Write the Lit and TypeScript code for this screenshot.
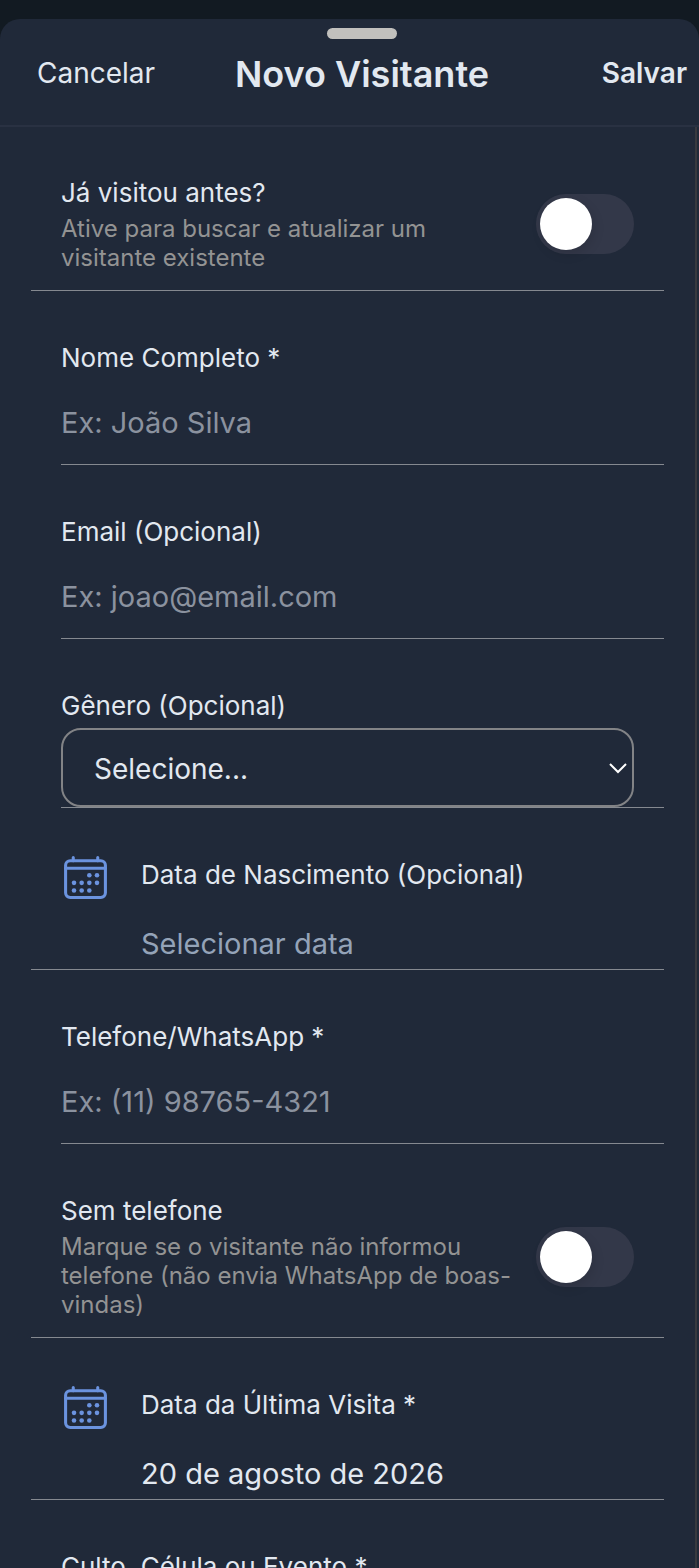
import { LitElement, html, css, svg } from "lit";
import { customElement } from "lit/decorators.js";

const dots = [
  [296, 232], [376, 232],
  [136, 312], [216, 312], [296, 312], [376, 312],
  [136, 392], [216, 392], [296, 392],
];

const calendarIcon = html`<svg class="icon" viewBox="0 0 512 512" aria-hidden="true">
  <rect x="48" y="80" width="416" height="384" rx="48" fill="none" stroke="currentColor" stroke-width="32" />
  <path d="M128 48v32M384 48v32M48 160h416" fill="none" stroke="currentColor" stroke-width="32" stroke-linecap="round" />
  ${dots.map(([x, y]) => svg`<circle cx=${x} cy=${y} r="24" fill="currentColor" />`)}
</svg>`;

@customElement("app-root")
export class AppRoot extends LitElement {
  static styles = css`
    :host {
      display: block;
      height: 100vh;
      overflow: hidden;
      background: #121a22;
      color: #e2e8f0;
      font-family: Inter, "Liberation Sans", sans-serif;
      font-size: 26px;
      line-height: 34px;
    }
    * { box-sizing: border-box; }
    button, input, select {
      margin: 0;
      padding: 0;
      border: 0;
      border-radius: 0;
      background: none;
      color: inherit;
      font: inherit;
      appearance: none;
    }
    .page { height: 100%; padding-top: 19px; }
    .sheet {
      display: flex;
      flex-direction: column;
      height: 100%;
      background: #202939;
      border-radius: 20px 20px 0 0;
    }
    .handle {
      flex: none;
      align-self: center;
      width: 70px;
      height: 11px;
      margin-top: 9px;
      margin-left: 24px;
      border-radius: 6px;
      background: #c1c0bd;
    }
    .header {
      flex: none;
      display: grid;
      grid-template-columns: 1fr auto 1fr;
      align-items: center;
      height: 88px;
      padding: 0 12px 18px 37px;
      border-bottom: 2px solid #293142;
    }
    .header-btn { font-size: 28px; justify-self: start; }
    .save { justify-self: end; font-weight: 600; }
    .title { margin: 0; padding-top: 2px; font-size: 36px; line-height: 46px; font-weight: 600; }
    .content {
      flex: 1;
      min-height: 0;
      margin-right: 2px;
      padding: 0 31px;
      border-right: 2px solid #38393e;
      overflow: hidden;
    }
    .row { padding-top: 50px; }
    .full { padding-left: 30px; border-bottom: 1px solid #858990; }
    .inset { margin-left: 30px; border-bottom: 1px solid #858990; }
    .label { display: block; }
    .toggle-row {
      display: flex;
      align-items: center;
      padding-right: 30px;
      padding-bottom: 18px;
    }
    .toggle-row:first-child { padding-top: 49px; }
    .toggle-text { flex: 1; }
    .hint { margin: 4px 0 0; font-size: 24px; line-height: 29px; color: #939393; }
    .toggle {
      flex: none;
      display: flex;
      align-items: center;
      width: 98px;
      height: 60px;
      padding: 4px;
      margin-left: 14px;
      border-radius: 30px;
      background: #333849;
    }
    .toggle::before {
      content: "";
      width: 52px;
      height: 52px;
      border-radius: 50%;
      background: #fff;
      box-shadow: 2px 4px 12px rgba(0, 0, 0, 0.12);
    }
    .toggle:checked { background: #6b93df; justify-content: flex-end; }
    .field { display: block; width: 100%; height: 83px; margin-top: 6px; font-size: 29px; outline: none; }
    .field::placeholder { color: #8b929f; opacity: 1; }
    .select-wrap { display: grid; align-items: center; margin: 5px 30px 0 0; }
    .select {
      grid-area: 1 / 1;
      width: 100%;
      height: 79px;
      padding: 2px 31px 0;
      border: 2px solid #828386;
      border-radius: 20px;
      font-size: 28px;
    }
    .chevron { grid-area: 1 / 1; justify-self: end; width: 18px; height: 12px; margin-right: 7px; pointer-events: none; }
    .date-row { display: flex; gap: 31px; padding-top: 0; padding-bottom: 5px; }
    .icon { flex: none; width: 49px; height: 49px; margin-top: 45px; color: #6b93df; }
    .date-text { flex: 1; padding-top: 50px; }
    .date { display: block; margin-top: 32px; font-size: 29px; line-height: 40px; }
    .empty { color: #94a3b8; }
  `;

  private toggle(id: string, label: string, hint: string) {
    return html`<div class="row full toggle-row">
      <div class="toggle-text">
        <label class="label" for=${id}>${label}</label>
        <p class="hint" id="${id}-hint">${hint}</p>
      </div>
      <input class="toggle" type="checkbox" role="switch" id=${id} aria-describedby="${id}-hint" />
    </div>`;
  }

  private input(id: string, type: string, label: string, placeholder: string) {
    return html`<div class="row inset">
      <label class="label" for=${id}>${label}</label>
      <input class="field" id=${id} type=${type} placeholder=${placeholder} />
    </div>`;
  }

  private date(id: string, label: string, value: string, empty = false) {
    return html`<div class="row full date-row">
      ${calendarIcon}
      <div class="date-text">
        <label class="label" for=${id}>${label}</label>
        <button class="date ${empty ? "empty" : ""}" id=${id} type="button">${value}</button>
      </div>
    </div>`;
  }

  render() {
    return html`<div class="page"><main class="sheet">
      <div class="handle"></div>
      <header class="header">
        <button class="header-btn" type="button">Cancelar</button>
        <h1 class="title">Novo Visitante</h1>
        <button class="header-btn save" type="button">Salvar</button>
      </header>
      <form class="content">
        ${this.toggle("returning", "Já visitou antes?", "Ative para buscar e atualizar um visitante existente")}
        ${this.input("name", "text", "Nome Completo *", "Ex: João Silva")}
        ${this.input("email", "email", "Email (Opcional)", "Ex: joao@email.com")}
        <div class="row inset">
          <label class="label" for="gender">Gênero (Opcional)</label>
          <div class="select-wrap">
            <select class="select" id="gender"><option>Selecione...</option></select>
            <svg class="chevron" viewBox="0 0 18 12" aria-hidden="true">
              <path d="M1 2l8 8L17 2" fill="none" stroke="#fff" stroke-width="2" />
            </svg>
          </div>
        </div>
        ${this.date("birth", "Data de Nascimento (Opcional)", "Selecionar data", true)}
        ${this.input("phone", "tel", "Telefone/WhatsApp *", "Ex: (11) 98765-4321")}
        ${this.toggle("no-phone", "Sem telefone", "Marque se o visitante não informou telefone (não envia WhatsApp de boas-vindas)")}
        ${this.date("visit", "Data da Última Visita *", "20 de agosto de 2026")}
        ${this.input("event", "text", "Culto, Célula ou Evento *", "")}
      </form>
    </main></div>`;
  }
}
